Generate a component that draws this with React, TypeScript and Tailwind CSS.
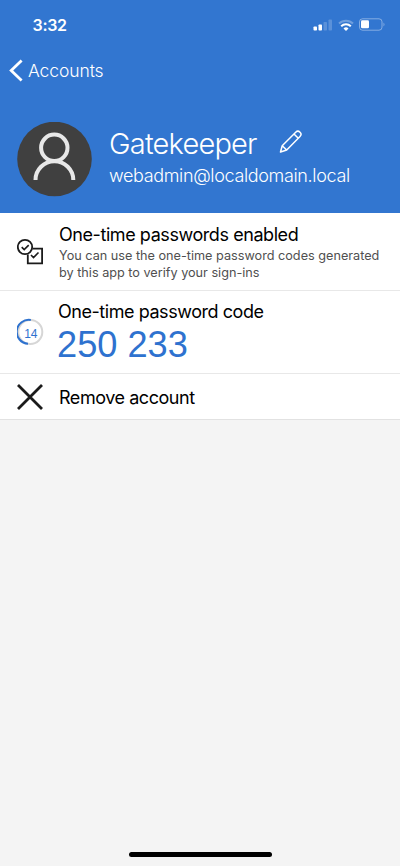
import React from "react";

function StatusBar() {
  return (
    <div className="flex h-12 items-center justify-between pl-[32.5px] pr-[14px]">
      <span className="pt-px text-[16px] leading-5 font-semibold tracking-[-0.3px]">3:32</span>
      <div className="flex items-center gap-[5px] pt-px">
        <svg width="20" height="12" viewBox="0 0 20 12" fill="#fff">
          <rect x="0.500" y="7.500" width="3.500" height="4" rx="0.8" />
          <rect x="5.500" y="5.500" width="3.500" height="6" rx="0.8" />
          <rect x="10.500" y="3" width="3.500" height="8.500" rx="0.8" opacity="0.2" />
          <rect x="15.500" y="0.500" width="3.500" height="11" rx="0.8" opacity="0.2" />
        </svg>
        <svg width="16" height="12" viewBox="0 0 16 12" fill="none" stroke="#fff" strokeWidth="2">
          <path d="M1 4.500a10 10 0 0 1 14 0" opacity="0.3" />
          <path d="M3.200 7.200a6.800 6.800 0 0 1 9.600 0" />
          <path d="M5.500 9.500a3.600 3.600 0 0 1 5 0L8 12z" fill="#fff" stroke="none" />
        </svg>
        <svg width="27" height="13" viewBox="0 0 27 13" fill="none">
          <rect x="0.500" y="0.800" width="22.500" height="11.400" rx="3" stroke="#fff" strokeOpacity="0.4" />
          <rect x="2" y="2.200" width="8" height="8" rx="1.300" fill="#fff" />
          <path d="M24.500 4.500q2 2 0 4z" fill="#fff" opacity="0.4" />
        </svg>
      </div>
    </div>
  );
}

function Header() {
  return (
    <header className="h-[213px] bg-[#3276d0] text-white">
      <StatusBar />
      <button className="flex h-[46px] items-center gap-[5px] pl-[9px]">
        <svg width="14" height="24" viewBox="0 0 14 24" fill="none" stroke="#fff" strokeWidth="2.800">
          <path d="M12.600 1.500L2.200 11.500l10.400 10" />
        </svg>
        <span className="text-[17.5px] leading-6 font-[350] tracking-[-0.1px]">Accounts</span>
      </button>
      <div className="flex pl-[17px] pt-7">
        <svg width="75" height="75" viewBox="0 0 75 75" fill="none">
          <circle cx="37.500" cy="37" r="37.300" fill="#404040" />
          <g stroke="#e8e8e8" strokeWidth="4">
            <circle cx="37.300" cy="25.800" r="13.200" />
            <path d="M18.500 58a18.900 18.700 0 0 1 37.800 0" />
          </g>
        </svg>
        <div className="ml-[17px] pt-1">
          <div className="flex items-center gap-[22px]">
            <h1 className="w-[148px] text-[29px] leading-[36px] font-[350] tracking-[-0.8px] whitespace-nowrap">Gatekeeper</h1>
            <svg className="mb-1" width="23" height="24" viewBox="0 0 23 24" fill="none" stroke="#fff" strokeWidth="1.500" strokeLinejoin="round">
              <path d="M1.500 22l1.700-6.300L16.700 2.200a3 3 0 0 1 4.300 4.300L7.700 20zM3.200 15.700l4.500 4.300M15 4l4.300 4.300" />
            </svg>
          </div>
          <p className="mt-[2px] text-[18px] leading-6 font-[350] tracking-[-0.35px] whitespace-nowrap">webadmin@localdomain.local</p>
        </div>
      </div>
    </header>
  );
}

export default function App() {
  return (
    <main className="flex h-[866px] w-[400px] flex-col overflow-hidden bg-[#f4f4f4] font-['Inter',sans-serif] text-black">
      <Header />
      <section className="flex h-[78px] border-b border-[#e8e8e8] bg-white pl-[17px]">
        <svg className="mt-[25px]" width="28" height="28" viewBox="0 0 28 28" fill="none" stroke="#1b1b1b" strokeWidth="1.800">
          <path d="M15.500 10.600h9.600v14.800H10.800V16.500" />
          <circle cx="8" cy="9" r="7.200" />
          <path d="M4.700 9.200l2.500 2.400 4.500-4.500M14 17l2.500 2.500 5-5" strokeWidth="1.600" />
        </svg>
        <div className="ml-[14px] pt-[10px]">
          <h2 className="text-[18px] leading-6 font-[380] tracking-[-0.43px] whitespace-nowrap">One-time passwords enabled</h2>
          <p className="text-[12.7px] leading-[17px] tracking-[-0.01px] whitespace-nowrap text-[#505050]">
            You can use the one-time password codes generated<br />by this app to verify your sign-ins
          </p>
        </div>
      </section>
      <section className="flex h-[83px] border-b border-[#e8e8e8] bg-white pl-[17px]">
        <svg className="mt-[27px]" width="28" height="28" viewBox="0 0 28 28" fill="none" strokeWidth="2">
          <circle cx="13.300" cy="14" r="12" stroke="#d6d6d6" />
          <path d="M13.800 2a12 12 0 1 0-2.800 23.800" stroke="#2e72cf" />
          <text x="13.700" y="19.500" textAnchor="middle" fontSize="12" letterSpacing="-0.3" fontFamily="Liberation Sans, sans-serif" fill="#2e72cf">14</text>
        </svg>
        <div className="ml-[13px] pt-[9px]">
          <h2 className="text-[18px] leading-6 font-[380] tracking-[-0.45px] whitespace-nowrap">One-time password code</h2>
          <p className="-ml-px font-['Liberation_Sans',sans-serif] text-[36.2px] leading-[42px] whitespace-nowrap text-[#2e72cf]">250 233</p>
        </div>
      </section>
      <section className="flex h-[46px] items-center border-b border-[#e2e2e2] bg-white pl-[17px]">
        <svg width="26" height="26" viewBox="0 0 26 26" fill="none" stroke="#1b1b1b" strokeWidth="2.800">
          <path d="M1 1l24 24M25 1L1 25" />
        </svg>
        <span className="ml-4 pt-[2px] text-[18px] leading-6 font-[380] tracking-[-0.45px] whitespace-nowrap">Remove account</span>
      </section>
      <div className="mt-auto mb-[9px] h-[5px] w-[143px] self-center rounded-full bg-black" />
    </main>
  );
}
